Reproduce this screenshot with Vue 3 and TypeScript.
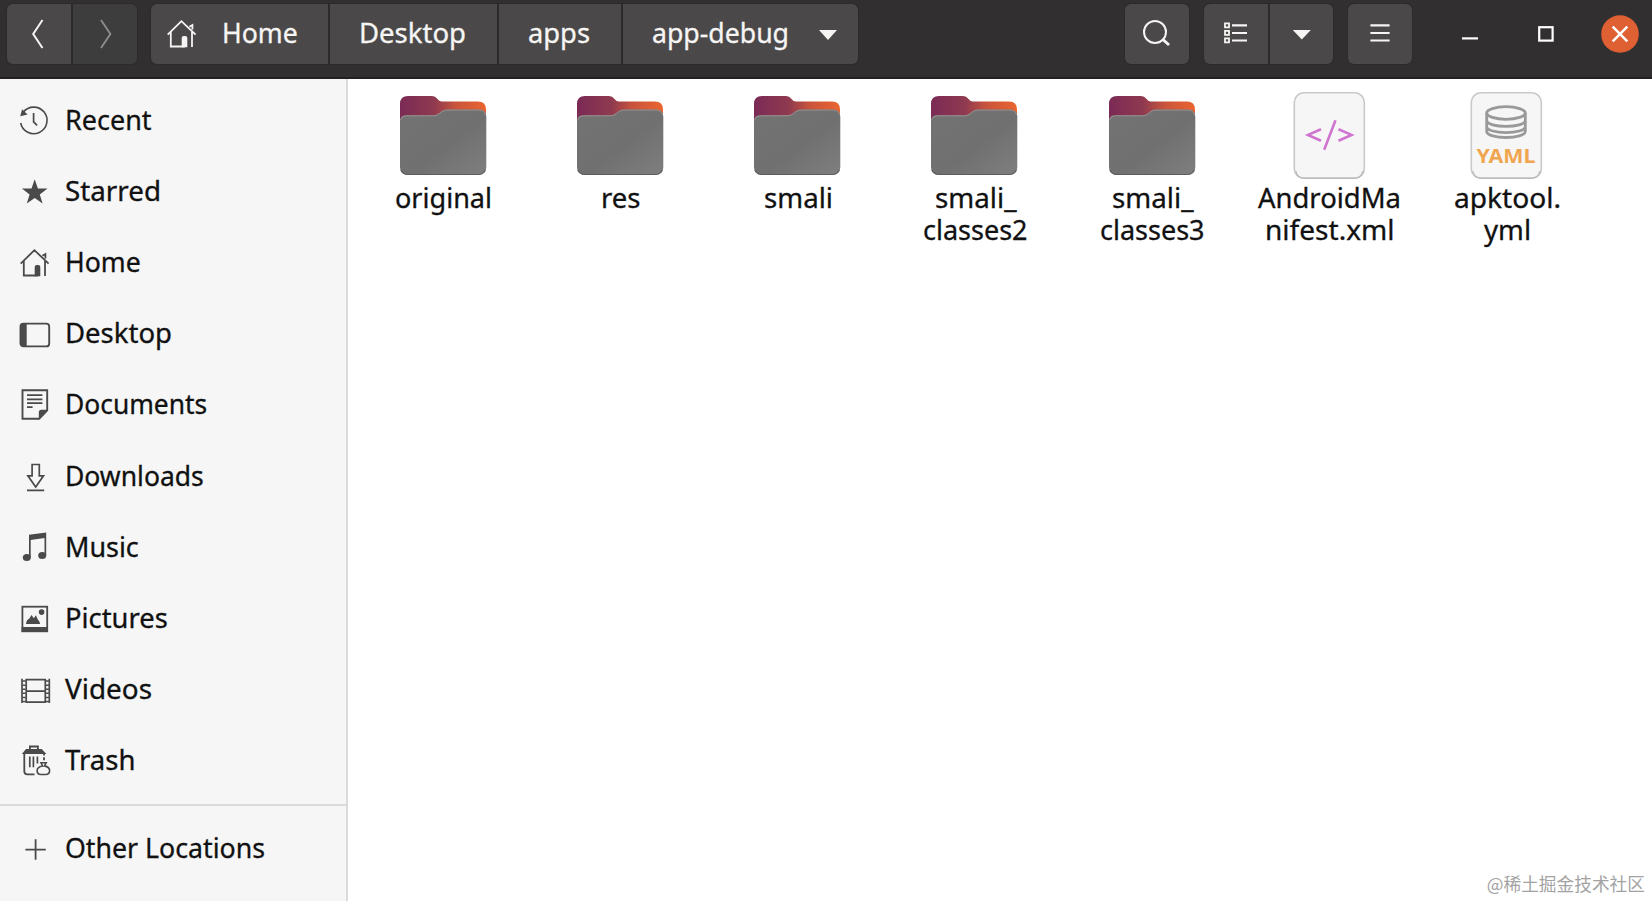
<script setup lang="ts">
import { h } from 'vue'

interface LabelProps { text: string; width: number }

// Text set to an exact advance width, baseline 27px below the top of a 36px line
const Label = (props: LabelProps) =>
  h('svg', { width: props.width, height: 36, style: { display: 'block', overflow: 'visible', flex: 'none' } }, [
    h('text', { x: 0, y: 27, textLength: props.width, lengthAdjust: 'spacingAndGlyphs', fill: 'currentColor', stroke: 'currentColor', 'stroke-width': 0.3 }, props.text),
  ])
Label.props = ['text', 'width']

const places = [
  { icon: 'recent', text: 'Recent', width: 86.6, dx: 0 },
  { icon: 'star', text: 'Starred', width: 96, dx: 0 },
  { icon: 'home', text: 'Home', width: 75.8, dx: 0 },
  { icon: 'desktop', text: 'Desktop', width: 107, dx: 0 },
  { icon: 'documents', text: 'Documents', width: 142.2, dx: 0 },
  { icon: 'downloads', text: 'Downloads', width: 138.8, dx: 0 },
  { icon: 'music', text: 'Music', width: 73.8, dx: 0 },
  { icon: 'pictures', text: 'Pictures', width: 102.8, dx: 0 },
  { icon: 'videos', text: 'Videos', width: 87, dx: 0.4 },
  { icon: 'trash', text: 'Trash', width: 70.4, dx: 0.2 },
]

const files = [
  { kind: 'folder', lines: [{ text: 'original', width: 97 }] },
  { kind: 'folder', lines: [{ text: 'res', width: 39.5 }] },
  { kind: 'folder', lines: [{ text: 'smali', width: 69 }] },
  { kind: 'folder', lines: [{ text: 'smali_', width: 81.5 }, { text: 'classes2', width: 104.5 }] },
  { kind: 'folder', lines: [{ text: 'smali_', width: 81.5 }, { text: 'classes3', width: 104.5 }] },
  { kind: 'xml', lines: [{ text: 'AndroidMa', width: 143 }, { text: 'nifest.xml', width: 129.5 }] },
  { kind: 'yaml', lines: [{ text: 'apktool.', width: 107 }, { text: 'yml', width: 47 }] },
]
</script>

<template>
  <div class="window">
    <svg class="defs" width="0" height="0" aria-hidden="true">
      <defs>
        <linearGradient id="folder-back" x1="0" x2="1" y1="0" y2="0">
          <stop offset="0" stop-color="#7b2a55" />
          <stop offset="0.4" stop-color="#8f3a50" />
          <stop offset="0.65" stop-color="#c9543c" />
          <stop offset="1" stop-color="#ea6530" />
        </linearGradient>
        <linearGradient id="folder-front" x1="0" x2="1" y1="0" y2="1">
          <stop offset="0" stop-color="#737373" />
          <stop offset="0.55" stop-color="#707070" />
          <stop offset="1" stop-color="#7f7f7f" />
        </linearGradient>
        <symbol id="i-recent" viewBox="0 0 32 32">
          <path d="M4.2 7.3A13.3 13.3 0 1 1 1.7 18" fill="none" stroke="currentColor" stroke-width="1.6" />
          <path d="M3.1 4.2 1.2 11.3 8.5 9.5Z" fill="currentColor" />
          <path d="M14.6 8v8.8l3.5 3.6" fill="none" stroke="currentColor" stroke-width="1.7" />
        </symbol>
        <symbol id="i-star" viewBox="0 0 32 32">
          <path d="m15.7 3.2 3.2 9.2 9.6.2-7.7 5.8 2.8 9-7.9-5.4L7.8 27.4l2.8-9L2.9 12.6l9.6-.2Z" fill="currentColor" />
        </symbol>
        <symbol id="i-home" viewBox="0 0 32 32">
          <path d="M1.7 16.6 15.4 3.2l14.2 13.4M4.8 14v14.5h14M26 14v15M23.4 8.7 26.4 7v4.6" fill="none" stroke="currentColor" stroke-width="1.8" />
          <path d="M15.7 29.2V20q0-2 2-2h1.6q2 0 2 2v9.2Z" fill="currentColor" />
        </symbol>
        <symbol id="i-desktop" viewBox="0 0 32 32">
          <rect x="1.5" y="5.6" width="28.7" height="22.8" rx="3" fill="none" stroke="currentColor" stroke-width="1.9" />
          <path d="M1.5 8.5q0-3 3-3h3.2v23H4.5q-3 0-3-3Z" fill="currentColor" />
        </symbol>
        <symbol id="i-documents" viewBox="0 0 32 32">
          <path d="M3.5 1.3h24.7v20l-8 8.4H3.5Z" fill="none" stroke="currentColor" stroke-width="1.9" />
          <path d="M8 6.2h15.4M8 10.4h15.4M8 14.2h15.4M8 18.1h5.6" stroke="currentColor" stroke-width="1.7" />
          <path d="M19.8 30.4v-7q0-2.6 2.6-2.6h6.5Z" fill="currentColor" />
        </symbol>
        <symbol id="i-downloads" viewBox="0 0 32 32">
          <path d="M13.1 3.5h7.2v11.3h4.2l-7.8 11.3-7.8-11.3h4.2ZM8 29.3h17.2" fill="none" stroke="currentColor" stroke-width="1.7" />
        </symbol>
        <symbol id="i-music" viewBox="0 0 32 32">
          <path d="M10 2.8 27.2.6v23.2h-1.7V6l-13.8 2v17.6H10Z" fill="currentColor" />
          <ellipse cx="7.8" cy="25.5" rx="4" ry="3.6" fill="currentColor" />
          <ellipse cx="23.2" cy="23.5" rx="4" ry="3.6" fill="currentColor" />
        </symbol>
        <symbol id="i-pictures" viewBox="0 0 32 32">
          <rect x="3.4" y="3.7" width="24.8" height="24.6" fill="none" stroke="currentColor" stroke-width="1.8" />
          <path d="M2.6 24h26.4v5.1H2.6ZM7 21q.4-4.4 3.2-5.2l2.3-3.8 2.4 3.3 2-3 1.9 4.3q1.7 1.5 2.4 4.4Z" fill="currentColor" />
          <circle cx="22.6" cy="9.1" r="2.8" fill="currentColor" />
        </symbol>
        <symbol id="i-videos" viewBox="0 0 32 32">
          <path d="M3 4.7v24.4M7.2 4.7v24.4M26.3 4.7v24.4M30.3 4.7v24.4M7 5.6h19.5M7 17.1h19.5M7 28.2h19.5" fill="none" stroke="currentColor" stroke-width="1.7" />
          <path d="M5.1 4.7v24.4M28.3 4.7v24.4" stroke="currentColor" stroke-width="3.2" stroke-dasharray="1.5 2.6" stroke-dashoffset="-1.6" />
        </symbol>
        <symbol id="i-trash" viewBox="0 0 32 32">
          <path d="M10.9 4.6V1.5h8v3.1M5.3 8v18q0 3.4 3.2 3.4h7M25 8v2.4M25 12.2v3" fill="none" stroke="currentColor" stroke-width="1.8" />
          <path d="M2.8 9 7 4.1h15.7l4.7 4.9Z" fill="currentColor" />
          <path d="M10.8 11.5v10.8M14.4 11.5v10.8M18.4 11.5v7" stroke="currentColor" stroke-width="1.7" />
          <path d="M22 17.7h5.2l-1.7 3.2q5.1 1.2 5.1 4.7 0 3.9-3.8 3.9h-5q-3.7 0-3.7-3.9 0-3.5 5.4-4.6Z" fill="none" stroke="currentColor" stroke-width="1.6" />
        </symbol>
        <symbol id="i-plus" viewBox="0 0 32 32">
          <path d="M16.6 6.3v20.4M6.4 16.6h20.4" stroke="currentColor" stroke-width="1.8" />
        </symbol>
      </defs>
    </svg>

    <header class="bar">
      <div class="group nav">
        <button class="btn back"><svg width="64" height="60"><path d="M35.5 16 26.2 30l9.3 14" fill="none" stroke="currentColor" stroke-width="2" /></svg></button>
        <button class="btn forward"><svg width="64" height="60"><path d="M28 16l9.4 14L28 44" fill="none" stroke="currentColor" stroke-width="1.8" /></svg></button>
      </div>
      <div class="group path">
        <button class="btn crumb home">
          <svg width="32" height="32"><use href="#i-home" /></svg>
          <Label text="Home" :width="75.8" />
        </button>
        <button class="btn crumb desktop"><Label text="Desktop" :width="107" /></button>
        <button class="btn crumb apps"><Label text="apps" :width="62" /></button>
        <button class="btn crumb current">
          <Label text="app-debug" :width="137" />
          <svg class="caret" width="18" height="10"><path d="M0 0h18L9 10Z" fill="currentColor" /></svg>
        </button>
      </div>
      <div class="spacer"></div>
      <button class="btn single search">
        <svg width="64" height="60"><circle cx="30" cy="28" r="11" fill="none" stroke="currentColor" stroke-width="2" /><path d="m37.4 35 6.6 6" stroke="currentColor" stroke-width="3" /></svg>
      </button>
      <div class="group view">
        <button class="btn list">
          <svg width="63.5" height="60">
            <path d="M21 19.4h4v4h-4ZM21 26.9h4v4h-4ZM21 34.4h4v4h-4Z" fill="none" stroke="currentColor" stroke-width="1.8" />
            <path d="M28 21.4h15M28 29h15M28 36.5h15" stroke="currentColor" stroke-width="2.2" />
          </svg>
        </button>
        <button class="btn more"><svg width="63.5" height="60"><path d="M22.8 26h18l-9 9.5Z" fill="currentColor" /></svg></button>
      </div>
      <button class="btn single menu">
        <svg width="64" height="60"><path d="M22.4 21.4h19.2M22.4 29h19.2M22.4 36.5h19.2" stroke="currentColor" stroke-width="2.2" /></svg>
      </button>
      <div class="controls">
        <svg width="16" height="20"><path d="M0 14.4h16" stroke="#fff" stroke-width="2.2" /></svg>
        <svg width="16" height="16"><rect x="1.2" y="1.2" width="13.4" height="13.4" fill="none" stroke="#fff" stroke-width="2.2" /></svg>
        <svg width="38" height="38"><circle cx="19" cy="19" r="18.8" fill="#df6033" /><path d="m11.7 11.7 14.6 14.6m0-14.6L11.7 26.3" stroke="#fff" stroke-width="2.5" /></svg>
      </div>
    </header>

    <main class="body">
      <aside class="side">
        <ul class="places">
          <li v-for="place in places" :key="place.text" class="place">
            <svg class="icon" width="32" height="32"><use :href="`#i-${place.icon}`" /></svg>
            <Label :text="place.text" :width="place.width" :style="{ marginLeft: place.dx + 'px' }" />
          </li>
        </ul>
        <div class="place other">
          <svg class="icon" width="32" height="32"><use href="#i-plus" /></svg>
          <Label text="Other Locations" :width="200" />
        </div>
      </aside>

      <section class="files">
        <div v-for="(file, i) in files" :key="i" class="file">
          <svg v-if="file.kind === 'folder'" class="thumb" width="88" height="88">
            <path d="M1 12Q1 4 9 4h24q3.5 0 5.3 2.8T43 9.5h36q8 0 8 8V40H1Z" fill="url(#folder-back)" />
            <path d="M1 29q0-5.8 6-5.8h27q4 0 6.3-2.3l2-1.6q2.2-1.8 5-1.8h33q7 0 7 7V75q0 8-8 8H9q-8 0-8-8Z" fill="url(#folder-front)" />
            <path d="M1.6 27.8q1-4 5.6-4h27q4 0 6.3-2.3l2-1.6q2.2-1.8 5-1.8h32.5q5.4 0 6.6 5" fill="none" stroke="#9b8f91" stroke-width="1" />
            <path d="M2 78q2 4.5 7 4.5h70q5 0 7-4.5" fill="none" stroke="#5c5c5c" stroke-width="1" />
          </svg>
          <svg v-else class="thumb" width="88" height="88">
            <rect x="9.3" y="0.8" width="70" height="85.4" rx="9.5" fill="#f6f6f6" stroke="#c9c9c9" stroke-width="1.6" />
            <path d="M10.8 79q1.4 7.2 8.5 7.2h50q7.1 0 8.5-7.2" fill="none" stroke="#b8b8b8" stroke-width="1.2" />
            <path v-if="file.kind === 'xml'" d="M36 37.2 23 42.9l13 5.8M50.5 28.2 39.2 57.7M53.5 37.2l13 5.7-13 5.8" fill="none" stroke="#cf74cf" stroke-width="2.6" />
            <template v-else>
              <g fill="none" stroke="#999" stroke-width="2.8">
                <ellipse cx="44" cy="21" rx="19.3" ry="6.3" />
                <path d="M24.7 21v18.2c0 8.4 38.6 8.4 38.6 0V21M24.7 28.2c0 8.2 38.6 8.2 38.6 0M24.7 34.4c0 8.2 38.6 8.2 38.6 0" />
              </g>
              <text class="yaml" x="14.4" y="71" textLength="59" lengthAdjust="spacingAndGlyphs">YAML</text>
            </template>
          </svg>
          <div class="caption">
            <Label v-for="line in file.lines" :key="line.text" class="line" :text="line.text" :width="line.width" />
          </div>
        </div>
      </section>
    </main>
    <div class="mark">@稀土掘金技术社区</div>
  </div>
</template>

<style>
html,
body {
  margin: 0;
  overflow: hidden;
}
</style>

<style scoped>
.window {
  position: relative;
  display: flex;
  flex-direction: column;
  width: 1652px;
  height: 901px;
  background: #fff;
  overflow: hidden;
  font: 27px "Noto Sans", "Open Sans", sans-serif;
}
.defs { position: absolute; }
svg { display: block; flex: none; }

.bar {
  display: flex;
  align-items: flex-start;
  box-sizing: border-box;
  flex: none;
  height: 79px;
  padding: 4px 13px 0 7px;
  background: #322f30;
  border-bottom: 2px solid #222021;
  color: #f6f5f4;
}
.group { display: flex; gap: 2px; border-radius: 6px; background: #2c2a2b; overflow: hidden; box-shadow: 0 0 0 1px #2c2a2b; }
.btn {
  display: flex;
  align-items: center;
  box-sizing: border-box;
  height: 60px;
  margin: 0;
  padding: 0;
  border: 0;
  background: #4a4848;
  color: inherit;
  font: inherit;
}
.single { border-radius: 6px; box-shadow: 0 0 0 1px #2c2a2b; }
.back { width: 63.5px; }
.forward { width: 64px; background: #3e3d3d; color: #8f8d8d; }
.nav { width: 129.5px; }
.path { margin-left: 14.5px; width: 707px; }
.home { width: 176.5px; padding-left: 14.5px; gap: 24.2px; }
.desktop { width: 167px; padding-left: 29.6px; }
.apps { width: 122px; padding-left: 29.5px; }
.current { width: 235.5px; padding-left: 29.3px; }
.caret { margin-left: 30.5px; margin-top: 2px; }
.spacer { flex: 1; }
.view { margin: 0 15px; }
.controls { display: flex; align-items: center; height: 60px; }
.controls svg:nth-child(1) { margin-left: 50px; }
.controls svg:nth-child(2) { margin-left: 59.5px; }
.controls svg:nth-child(3) { margin-left: 47.5px; }

.body { display: flex; flex: 1; min-height: 0; }
.side {
  box-sizing: border-box;
  flex: none;
  width: 348px;
  padding-top: 6.1px;
  background: #f6f6f6;
  border-right: 2px solid #dadada;
}
.places { margin: 0; padding: 0 0 6.9px; list-style: none; border-bottom: 2px solid #dadada; }
.place { display: flex; align-items: center; height: 71.2px; padding-left: 19px; color: #111; }
.icon { margin-right: 13.8px; color: #4a4a4a; }
.other { padding-top: 8px; }

.files { display: grid; grid-template-columns: repeat(7, 177.25px); align-content: start; padding: 13px 0 0 5.9px; color: #111; }
.file { display: flex; flex-direction: column; align-items: center; }
.caption { display: flex; flex-direction: column; align-items: center; padding: 1px 0 0 2px; }
.line + .line { margin-top: -4px; }
.yaml { font: 700 20px "Noto Sans", sans-serif; fill: #f0a650; }

.mark {
  position: absolute;
  right: 7px;
  bottom: 5px;
  font: 17.7px/25px "Noto Sans CJK SC", sans-serif;
  color: #a3a3a3;
  white-space: nowrap;
}
</style>
